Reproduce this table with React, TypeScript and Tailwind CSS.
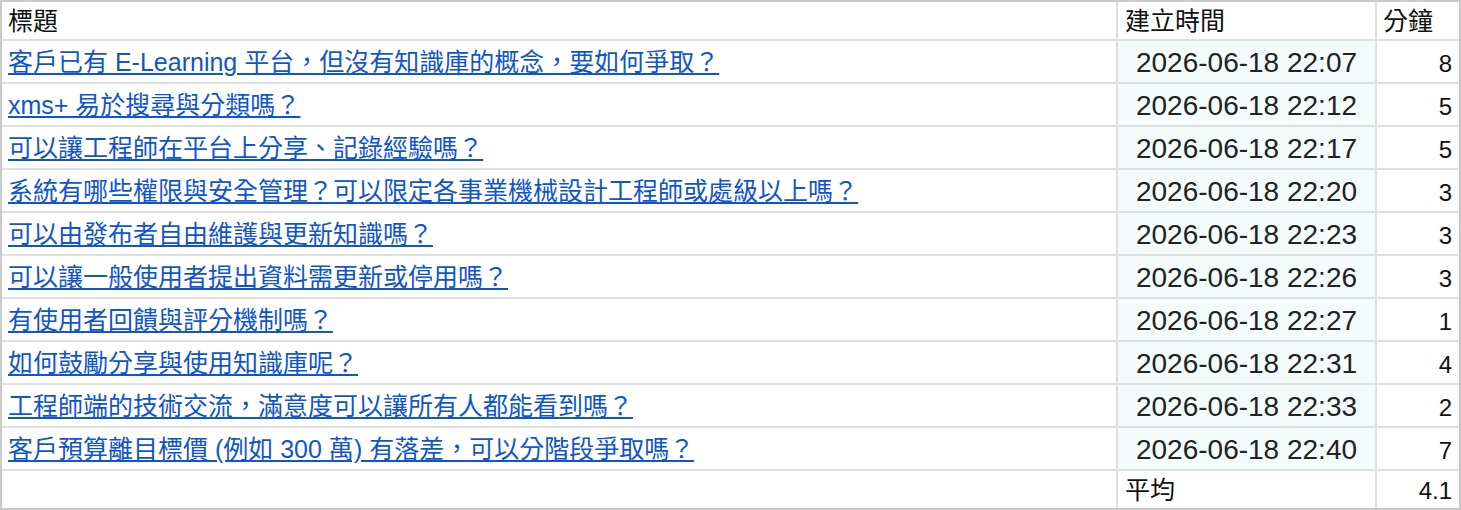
import React from "react";

const rows: [string, string, number][] = [
  ["客戶已有 E-Learning 平台，但沒有知識庫的概念，要如何爭取？", "2026-06-18 22:07", 8],
  ["xms+ 易於搜尋與分類嗎？", "2026-06-18 22:12", 5],
  ["可以讓工程師在平台上分享、記錄經驗嗎？", "2026-06-18 22:17", 5],
  ["系統有哪些權限與安全管理？可以限定各事業機械設計工程師或處級以上嗎？", "2026-06-18 22:20", 3],
  ["可以由發布者自由維護與更新知識嗎？", "2026-06-18 22:23", 3],
  ["可以讓一般使用者提出資料需更新或停用嗎？", "2026-06-18 22:26", 3],
  ["有使用者回饋與評分機制嗎？", "2026-06-18 22:27", 1],
  ["如何鼓勵分享與使用知識庫呢？", "2026-06-18 22:31", 4],
  ["工程師端的技術交流，滿意度可以讓所有人都能看到嗎？", "2026-06-18 22:33", 2],
  ["客戶預算離目標價 (例如 300 萬) 有落差，可以分階段爭取嗎？", "2026-06-18 22:40", 7],
];

export default function App() {
  return (
    <div
      className="w-[1461px] h-[510px] bg-white text-[#111]"
      style={{ fontFamily: '"Liberation Sans", "Noto Sans CJK TC", sans-serif' }}
    >
      <div className="grid grid-cols-[1114px_257px_82px] grid-rows-[37px_repeat(10,41px)_37px] gap-[2px] bg-[#dfdfdf] border-2 border-[#c9c9c9] w-[1461px] h-[510px]">
        <div className="bg-white flex items-center pt-[3px] px-[6px] text-[25px]">標題</div>
        <div className="bg-white flex items-center pt-[3px] px-[7px] text-[25px]">建立時間</div>
        <div className="bg-white flex items-center pt-[3px] px-[6px] text-[25px]">分鐘</div>
        {rows.map(([t, d, m], i) => (
          <React.Fragment key={i}>
            <div className="bg-white flex items-center pt-[3px] px-[6px] text-[25px] whitespace-nowrap">
              <a href="#" className="text-[#1155cc] underline">
                {t}
              </a>
            </div>
            <div className="bg-[#f3fbfb] flex items-center justify-center pt-[2px] text-[28px] text-[#222]">
              {d}
            </div>
            <div className="bg-white flex items-center justify-end pt-[4px] px-[7px] text-[24px]">{m}</div>
          </React.Fragment>
        ))}
        <div className="bg-white" />
        <div className="bg-white flex items-center pt-[3px] px-[7px] text-[25px]">平均</div>
        <div className="bg-white flex items-center justify-end pt-[3px] px-[7px] text-[24px]">4.1</div>
      </div>
    </div>
  );
}
